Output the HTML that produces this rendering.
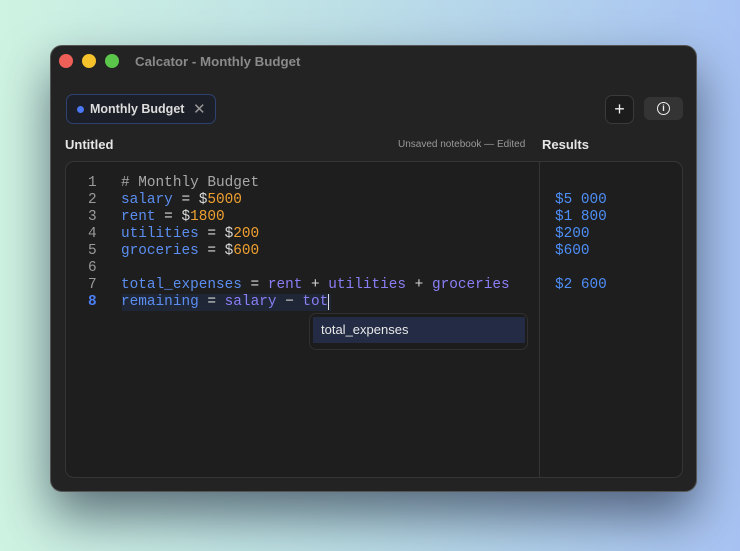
<!DOCTYPE html>
<html><head><meta charset="utf-8"><style>
*{margin:0;padding:0;box-sizing:border-box}
body{width:740px;height:551px;overflow:hidden;background:linear-gradient(90deg,#cff3e2 0%,#bde0e6 45%,#a8c3f3 100%);font-family:"Liberation Sans",sans-serif;position:relative}
.win{position:absolute;left:50px;top:45px;width:647px;height:447px;background:#232323;border-radius:12px;border:1px solid #555;box-shadow:0 24px 50px rgba(20,30,50,.6)}
.dot{position:absolute;top:8px;width:14px;height:14px;border-radius:50%}
.title{position:absolute;left:84px;top:8px;color:#8a8a8a;font-weight:bold;font-size:13.3px}
.tab{position:absolute;left:15px;top:48px;width:150px;height:30px;border:1px solid #2e4270;border-radius:7px;background:#1c1f27;color:#ddd;font-weight:bold;font-size:12.5px}
.abs{position:absolute}
.panel{position:absolute;left:14px;top:115px;width:618px;height:317px;border:1px solid #353535;border-radius:9px;background:#1e1e1e}
.code{position:absolute;font-family:"Liberation Mono",monospace;font-size:14.4px;line-height:17px;white-space:pre}
.b{color:#5b8ef0}.p{color:#8a7ef5}.o{color:#f0a030}.w{color:#d8d8d8}.g{color:#9a9a9a}.c{color:#a8a8a8}
</style></head><body>
<div class="win">
<div class="dot" style="left:8px;background:#ee5f57"></div>
<div class="dot" style="left:31px;background:#f5c22c"></div>
<div class="dot" style="left:54px;background:#5bc74a"></div>
<div class="title">Calcator - Monthly Budget</div>
<div class="tab"><span class="abs" style="left:10px;top:11px;width:7px;height:7px;border-radius:50%;background:#4a78f5"></span><span class="abs" style="left:23px;top:7px">Monthly Budget</span><span class="abs" style="left:126px;top:5px;color:#999;font-weight:normal;font-size:15px">✕</span></div>
<div class="abs" style="left:554px;top:49px;width:29px;height:29px;border:1px solid #3a3a3a;border-radius:7px;background:#1c1c1c;color:#eee;text-align:center;font-size:18px;line-height:26px">+</div>
<div class="abs" style="left:593px;top:51px;width:39px;height:23px;border-radius:6px;background:#343434"><span class="abs" style="left:13px;top:5px;width:13px;height:13px;border:1.3px solid #eee;border-radius:50%;color:#eee;font-size:9px;font-weight:bold;text-align:center;line-height:11px">i</span></div>
<div class="abs" style="left:14px;top:91px;color:#e6e6e6;font-weight:bold;font-size:13px">Untitled</div>
<div class="abs" style="left:347px;top:93px;color:#999;font-size:10px">Unsaved notebook — Edited</div>
<div class="abs" style="left:491px;top:91px;color:#e6e6e6;font-weight:bold;font-size:13px">Results</div>
<div class="panel">
<div class="abs" style="left:473px;top:0;width:1px;height:315px;background:#353535"></div>
<div class="abs" style="left:56px;top:132px;width:209px;height:17px;background:#1f2636"></div>
<div class="code g" style="left:22px;top:13px;text-align:right">1
2
3
4
5
6
7
<span style="color:#4a7ef5;font-weight:bold">8</span></div>
<div class="code" style="left:55px;top:13px"><span class="c"># Monthly Budget</span>
<span class="b">salary</span><span class="w"> = $</span><span class="o">5000</span>
<span class="b">rent</span><span class="w"> = $</span><span class="o">1800</span>
<span class="b">utilities</span><span class="w"> = $</span><span class="o">200</span>
<span class="b">groceries</span><span class="w"> = $</span><span class="o">600</span>

<span class="b">total_expenses</span><span class="w"> = </span><span class="p">rent</span><span class="w"> + </span><span class="p">utilities</span><span class="w"> + </span><span class="p">groceries</span>
<span class="b">remaining</span><span class="w"> = </span><span class="p">salary</span><span class="w"> − </span><span class="p">tot</span><span style="border-left:1.5px solid #ddd;margin-left:0"></span></div>
<div class="code" style="left:489px;top:30px;color:#4d8ef7">$5 000
$1 800
$200
$600

$2 600</div>
<div class="abs" style="left:243px;top:151px;width:219px;height:37px;border:1px solid #303030;border-radius:7px;background:#1c1c1c">
<div class="abs" style="left:3px;top:3px;width:212px;height:26px;background:#232b45;color:#e8e8e8;font-size:13px;line-height:26px;padding-left:8px">total_expenses</div>
</div>
</div>
</div>
</body></html>
